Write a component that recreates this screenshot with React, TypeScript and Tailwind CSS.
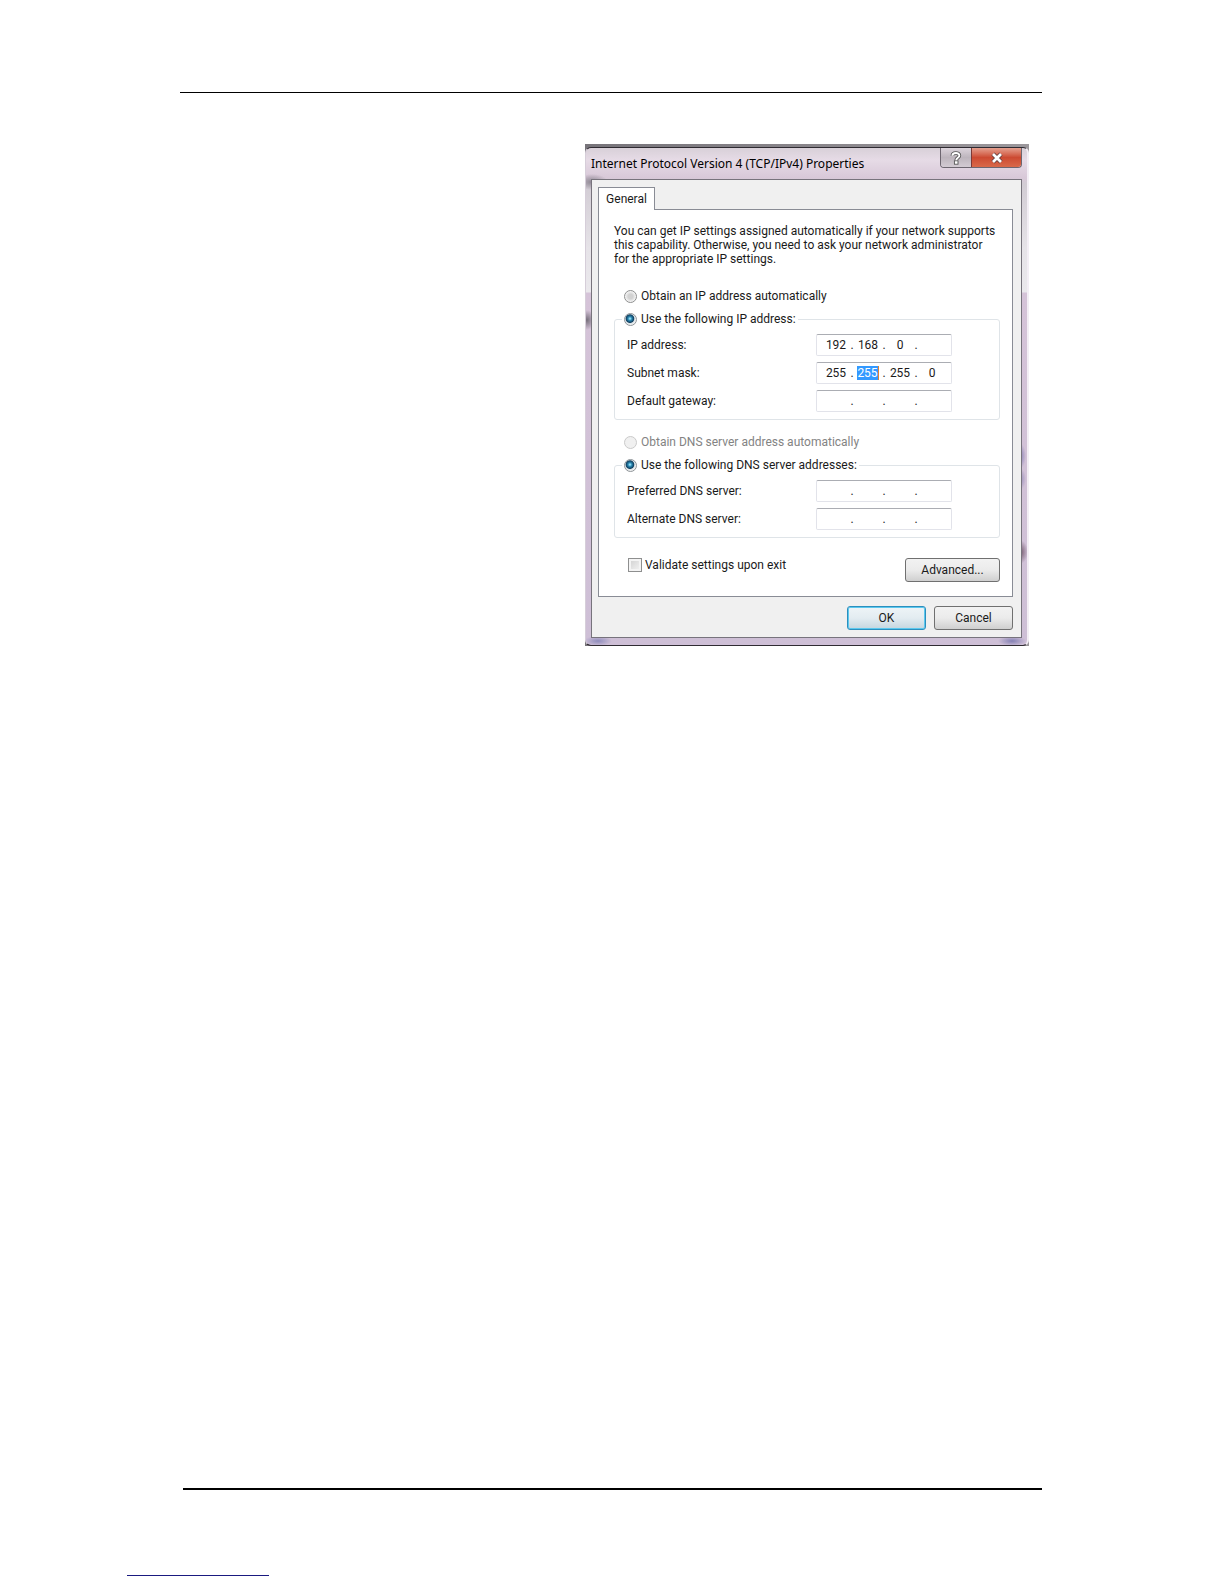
import { useState } from "react";

type IpRowProps = {
  label: string;
  name: string;
  octets: string[];
  selected?: number;
};

function IpRow({ label, name, octets, selected }: IpRowProps) {
  const [values, setValues] = useState(octets);

  const update = (index: number, value: string) => {
    setValues(values.map((v, i) => (i === index ? value.replace(/\D/g, "") : v)));
  };

  return (
    <div className="flex h-7 items-center">
      <label htmlFor={`${name}-0`} className="flex-1">
        {label}
      </label>
      <div className="flex h-[22px] w-[136px] items-center rounded-xs border border-[#e2e3ea] border-t-[#abadb3] bg-white pl-[7px]">
        {values.map((value, index) => (
          <div key={index} className="flex items-center">
            <input
              id={`${name}-${index}`}
              aria-label={index === 0 ? undefined : `${label} part ${index + 1}`}
              value={value}
              maxLength={3}
              onChange={(e) => update(index, e.target.value)}
              className={
                selected === index
                  ? "mx-px h-3.5 w-[22px] border-r border-[#e08030] bg-[#3399ff] text-center text-white outline-none"
                  : "h-3.5 w-6 bg-transparent text-center outline-none"
              }
            />
            {index < 3 && <span className="w-2 text-center">.</span>}
          </div>
        ))}
      </div>
    </div>
  );
}

type RadioProps = {
  label: string;
  name: string;
  checked: boolean;
  disabled?: boolean;
  onSelect?: () => void;
};

function Radio({ label, name, checked, disabled, onSelect }: RadioProps) {
  return (
    <label className={disabled ? "flex items-center gap-1 text-[#838383]" : "flex items-center gap-1"}>
      <input
        type="radio"
        name={name}
        checked={checked}
        disabled={disabled}
        onChange={onSelect}
        className="size-[13px] appearance-none rounded-full border border-[#8e8f8f] bg-[radial-gradient(circle,#d2d2d2_0_30%,#f6f6f6_70%)] checked:border-[#8e9498] checked:bg-[radial-gradient(circle_at_45%_42%,#8fdcf4_0_6%,#2a86b0_22%,#0f3f60_44%,#dbe2e6_54%,#f4f4f4_72%)] disabled:border-[#cacaca] disabled:bg-none disabled:bg-[#f0f0f0]"
      />
      {label}
    </label>
  );
}

const buttonBase =
  "h-6 rounded-[3px] border bg-linear-to-b from-[#f2f2f2] from-0% via-[#ebebeb] via-50% to-[#cfcfcf] text-center";

// Glass frame: tinted base with the blurred desktop showing through as soft spots
const glassFrame =
  "bg-[radial-gradient(ellipse_8px_14px_at_432px_308px,#6f68a6,transparent),radial-gradient(ellipse_8px_12px_at_432px_331px,#8279ac,transparent),radial-gradient(ellipse_8px_12px_at_434px_404px,#6e5266,transparent),radial-gradient(ellipse_8px_10px_at_1px_172px,#77707c,transparent),radial-gradient(ellipse_16px_8px_at_6px_34px,#8d8692,transparent),radial-gradient(ellipse_14px_5px_at_12px_493px,#8f8cbc,transparent),radial-gradient(ellipse_14px_5px_at_426px_493px,#8480b4,transparent),linear-gradient(to_bottom,#d8d0d8_0,#e6dbe6_12px,#d8c8d8_30px,#d2ccd4_36px,#e6e3e8_100px,#eae8ec_144px,#d5c3d8_145px,#cebfd6_100%)]";

function PropertiesDialog() {
  const [autoIp, setAutoIp] = useState(false);
  const [validate, setValidate] = useState(false);

  return (
    <section
      aria-labelledby="dialog-title"
      className="w-[444px] bg-linear-to-r from-[#77747a] to-[#9b979b] pt-[3px] text-xs leading-[14px] text-[#1a1a1a] [font-family:Roboto,sans-serif]"
    >
      <div
        className={`${glassFrame} rounded-md border border-r-2 border-t-[#2f2b32] border-r-[#f3eef5] border-b-[#2f2b32] border-l-[#d6ced9] pr-[5px] pb-[7px] pl-[5px]`}
      >
        <header className="flex h-[31px] items-start">
          <h1
            id="dialog-title"
            className="flex-1 pt-[7px] text-xs leading-[18px] whitespace-nowrap text-black [font-family:'Noto_Sans',sans-serif]"
          >
            Internet Protocol Version 4 (TCP/IPv4) Properties
          </h1>
          <div className="flex h-5 overflow-hidden rounded-b border border-t-0 border-[#6d6670]">
            <button
              aria-label="Help"
              className="flex w-[30px] items-center justify-center bg-linear-to-b from-[#dcd4dc] via-[#bdb5bd] to-[#d3cbd3]"
            >
              <svg width="12" height="14" viewBox="0 0 12 14" fill="none">
                <path d="M2.4 4.8C2.4 1.2 9.4 1.2 9.4 4.5C9.4 6.8 6.2 6.6 6.2 9.2" stroke="#555" strokeWidth="3.6" />
                <rect x="4.4" y="9.8" width="3.6" height="3.4" fill="#fff" stroke="#555" strokeWidth="0.9" />
                <path d="M2.4 4.8C2.4 1.2 9.4 1.2 9.4 4.5C9.4 6.8 6.2 6.6 6.2 9.2" stroke="#fff" strokeWidth="1.9" />
              </svg>
            </button>
            <button
              aria-label="Close"
              className="flex w-[50px] items-center justify-center border-l border-[#7d3a36] bg-linear-to-b from-[#e4a08f] via-[#cc4a32] to-[#d9694a]"
            >
              <svg width="14" height="12" viewBox="0 0 14 12" fill="none">
                <path d="M3 2L11 10M11 2L3 10" stroke="#5d3a3a" strokeWidth="4.4" />
                <path d="M3 2L11 10M11 2L3 10" stroke="#fff" strokeWidth="2.8" />
              </svg>
            </button>
          </div>
        </header>

        <div className="border border-[#77737c] bg-[#f0f0f0] pt-[7px] pr-2 pb-[7px] pl-1.5">
          <div role="tablist" className="flex">
            <button
              role="tab"
              aria-selected="true"
              className="z-10 -mb-px h-[23px] w-[57px] border border-b-0 border-[#898c95] bg-white"
            >
              General
            </button>
          </div>

          <div role="tabpanel" className="border border-[#898c95] bg-white pt-[14px] pr-3 pb-[14px] pl-[15px]">
            <p className="whitespace-nowrap">
              You can get IP settings assigned automatically if your network supports
              <br />
              this capability. Otherwise, you need to ask your network administrator
              <br />
              for the appropriate IP settings.
            </p>

            <div className="mt-[23px] pl-2.5">
              <Radio
                name="ip-mode"
                label="Obtain an IP address automatically"
                checked={autoIp}
                onSelect={() => setAutoIp(true)}
              />
            </div>
            <fieldset className="mt-[9px] rounded-[3px] border border-[#dfe4e8] px-3 pb-1">
              <legend className="-ml-[5px] px-0.5">
                <Radio
                  name="ip-mode"
                  label="Use the following IP address:"
                  checked={!autoIp}
                  onSelect={() => setAutoIp(false)}
                />
              </legend>
              <div className="pt-[5px] pr-[35px]">
                <IpRow label="IP address:" name="ip" octets={["192", "168", "0", ""]} />
                <IpRow label="Subnet mask:" name="mask" octets={["255", "255", "255", "0"]} selected={1} />
                <IpRow label="Default gateway:" name="gateway" octets={["", "", "", ""]} />
              </div>
            </fieldset>

            <div className="mt-[15px] pl-2.5">
              <Radio name="dns-mode" label="Obtain DNS server address automatically" checked={false} disabled />
            </div>
            <fieldset className="mt-[9px] rounded-[3px] border border-[#dfe4e8] px-3 pb-1">
              <legend className="-ml-[5px] px-0.5">
                <Radio name="dns-mode" label="Use the following DNS server addresses:" checked onSelect={() => {}} />
              </legend>
              <div className="pt-[5px] pr-[35px]">
                <IpRow label="Preferred DNS server:" name="dns1" octets={["", "", "", ""]} />
                <IpRow label="Alternate DNS server:" name="dns2" octets={["", "", "", ""]} />
              </div>
            </fieldset>

            <div className="mt-5 flex items-start justify-between pl-[14px]">
              <label className="flex items-center gap-[3px]">
                <input
                  type="checkbox"
                  checked={validate}
                  onChange={(e) => setValidate(e.target.checked)}
                  className="size-[14px] appearance-none border border-[#8e8f8f] bg-linear-to-br from-[#cfcfcf] to-[#f6f6f6] shadow-[inset_0_0_0_2px_#f4f4f4] checked:bg-[#4a5f97]"
                />
                Validate settings upon exit
              </label>
              <button className={`${buttonBase} w-[95px] border-[#707070]`}>Advanced...</button>
            </div>
          </div>

          <div className="mt-[9px] flex justify-end gap-2">
            <button className="h-6 w-[79px] rounded-[3px] border border-[#2c8fbe] bg-linear-to-b from-[#eef4f7] via-[#e3ecf1] to-[#c5d6df] text-center shadow-[inset_0_0_0_1px_#5cc8ee]">
              OK
            </button>
            <button className={`${buttonBase} w-[79px] border-[#707070]`}>Cancel</button>
          </div>
        </div>
      </div>
    </section>
  );
}

export default function App() {
  return (
    <div className="flex min-h-screen flex-col bg-white">
      <main className="mr-[182px] ml-[180px] flex-1 pt-[92px]">
        <hr className="border-t border-black" />
        <div className="mt-[51px] mr-[13px] flex justify-end">
          <PropertiesDialog />
        </div>
      </main>
      <footer className="pb-2">
        <hr className="mr-[182px] ml-[183px] border-t-2 border-black" />
        <a href="#" aria-label="Page link" className="mt-[85px] ml-[127px] block w-[142px] border-b border-[#1a1a80]" />
      </footer>
    </div>
  );
}
